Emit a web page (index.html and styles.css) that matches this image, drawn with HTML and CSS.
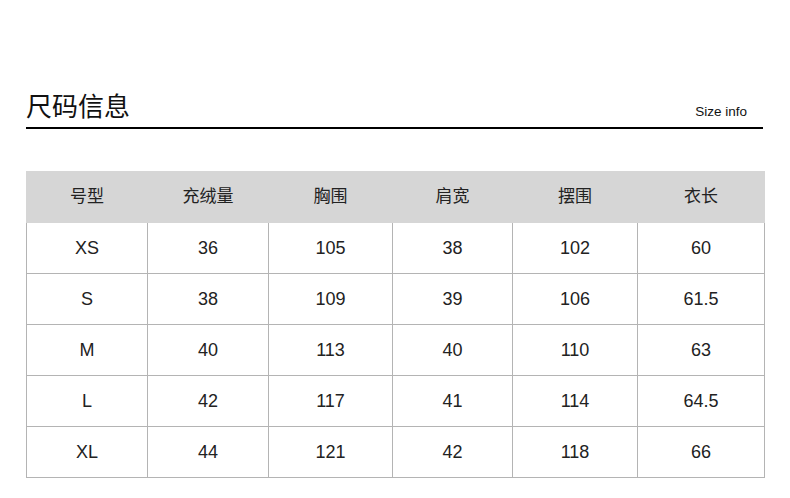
FILE: index.html
```html
<!DOCTYPE html>
<html lang="zh">
<head>
<meta charset="utf-8">
<title>尺码信息</title>
<link rel="stylesheet" href="styles.css">
</head>
<body>
<div class="page">
  <div class="head">
    <h1 class="title">尺码信息</h1>
    <span class="sub">Size info</span>
  </div>
  <table class="size-table">
    <colgroup>
      <col class="c1"><col class="c2"><col class="c3"><col class="c4"><col class="c5"><col class="c6">
    </colgroup>
    <thead>
      <tr><th>号型</th><th>充绒量</th><th>胸围</th><th>肩宽</th><th>摆围</th><th>衣长</th></tr>
    </thead>
    <tbody>
      <tr><td>XS</td><td>36</td><td>105</td><td>38</td><td>102</td><td>60</td></tr>
      <tr><td>S</td><td>38</td><td>109</td><td>39</td><td>106</td><td>61.5</td></tr>
      <tr><td>M</td><td>40</td><td>113</td><td>40</td><td>110</td><td>63</td></tr>
      <tr><td>L</td><td>42</td><td>117</td><td>41</td><td>114</td><td>64.5</td></tr>
      <tr><td>XL</td><td>44</td><td>121</td><td>42</td><td>118</td><td>66</td></tr>
    </tbody>
  </table>
</div>
</body>
</html>
```
FILE: styles.css
```css
html, body {
  margin: 0;
  padding: 0;
  background: #fff;
}
body {
  font-family: "Liberation Sans", "Noto Sans CJK SC", Arial, sans-serif;
  color: #222;
}
.page {
  padding: 90px 0 0 26px;
  width: 739px;
}
.head {
  display: flex;
  justify-content: space-between;
  align-items: flex-end;
  width: 737px;
  padding: 0 16px 7px 0;
  box-sizing: border-box;
  border-bottom: 2px solid #000;
}
.title {
  margin: 0;
  font-family: "Noto Sans CJK SC", sans-serif;
  font-weight: normal;
  font-size: 26px;
  line-height: 30px;
  color: #111;
}
.sub {
  font-size: 13.5px;
  line-height: 16px;
  color: #111;
}
.size-table {
  margin-top: 42px;
  border-collapse: collapse;
  table-layout: fixed;
  width: 738px;
}
.c1 { width: 121px; }
.c2 { width: 121px; }
.c3 { width: 124px; }
.c4 { width: 120px; }
.c5 { width: 125px; }
.c6 { width: 127px; }
.size-table th,
.size-table td {
  padding: 0;
  height: 50px;
  text-align: center;
  vertical-align: middle;
}
.size-table th {
  background: #d6d6d6;
  border: 1px solid #d6d6d6;
  font-family: "Noto Sans CJK SC", sans-serif;
  font-weight: normal;
  font-size: 17px;
  line-height: 20px;
  padding-bottom: 5px;
  height: 45px;
  color: #222;
}
.size-table td {
  border: 1px solid #b4b4b4;
  font-size: 18px;
  color: #222;
}
```
